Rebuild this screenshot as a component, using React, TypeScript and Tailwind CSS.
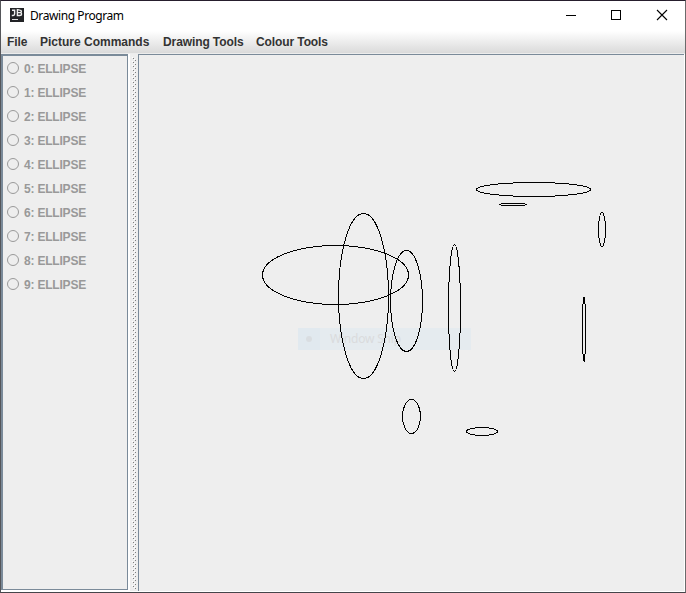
type EllipseBox = [left: number, top: number, right: number, bottom: number];

const ellipses: EllipseBox[] = [
  [262, 245, 408, 304],
  [338, 213, 388, 378],
  [390, 250, 422, 351],
  [448, 244, 460, 371],
  [476, 182, 590, 196],
  [499, 203, 526, 205],
  [598, 212, 605, 246],
  [582, 297, 585, 361],
  [402, 399, 420, 433],
  [466, 427, 497, 435],
];

const menus = [
  { label: "File", box: "w-[33px] tracking-[-0.1px]" },
  { label: "Picture Commands", box: "w-[123px] tracking-[0px]" },
  { label: "Drawing Tools", box: "w-[93px] tracking-[-0.1px]" },
  { label: "Colour Tools", box: "w-[90px] tracking-[-0.1px]" },
];

function TitleBar() {
  return (
    <header className="flex h-[30px] shrink-0 items-center bg-white pl-[9px]">
      <svg width="14" height="14" viewBox="0 0 14 14" className="relative -top-px shrink-0">
        <rect width="14" height="14" fill="#222326" />
        <path d="M2 2.2h2.6v3.9q0 1.4-1.4 1.4H1.8M7.4 1.6v5.9h2.4q1.8 0 1.8-1.5 0-1.3-1.4-1.4 1.2-.2 1.2-1.3 0-1.2-1.6-1.2zM7.4 4.6h3" fill="none" stroke="#eee" strokeWidth="1.4" />
        <path d="M2 11.5h6" stroke="#ddd" />
      </svg>
      <h1 className="ml-[6px] grow whitespace-nowrap font-['Noto_Sans','Open_Sans',sans-serif] text-[12px] leading-[16px] tracking-[-0.42px] text-black">
        Drawing Program
      </h1>
      <svg width="120" height="30" viewBox="565 1 120 30" fill="none" stroke="#000" className="shrink-0">
        <path d="M566 15.5h10M611.5 10.5h9v9h-9z" shapeRendering="crispEdges" />
        <path d="M657 10l10 10M667 10l-10 10" strokeWidth="1.1" />
      </svg>
    </header>
  );
}

function ShapeList() {
  return (
    <aside className="flex w-[127px] shrink-0 flex-col border-t-2 border-r border-b border-l-2 border-[#7a8a99] pt-[1px]">
      {ellipses.map((_, i) => (
        <label key={i} className="flex h-6 shrink-0 items-center pl-[4px]">
          <svg width="12" height="12" viewBox="0 0 12 12" className="relative -top-px shrink-0">
            <circle cx="6" cy="6" r="5.5" fill="none" stroke="#999" />
          </svg>
          <span className="ml-[5px] whitespace-nowrap text-[12px] font-bold leading-[14px] tracking-[-0.2px] text-[#999]">
            {i}: ELLIPSE
          </span>
        </label>
      ))}
    </aside>
  );
}

function Divider() {
  return (
    <svg width="8" height="537" viewBox="130 54 8 537" shapeRendering="crispEdges" className="shrink-0">
      <defs>
        <pattern id="bumps" x="132" y="57" width="4" height="4" patternUnits="userSpaceOnUse">
          <path d="M0 0h1v1h-1zM2 2h1v1h-1z" fill="#fff" />
          <path d="M1 1h1v1h-1zM3 3h1v1h-1z" fill="#7f7f7f" />
        </pattern>
      </defs>
      <rect x="132" y="57" width="4" height="532" fill="url(#bumps)" />
    </svg>
  );
}

// Outlines only a few pixels across are stepped by hand; larger ones are true ellipses.
function Outline({ box: [l, t, r, b] }: { box: EllipseBox }) {
  if (b - t < 4) {
    return (
      <path
        d={`M${l + 2} ${t + 0.5}H${r - 1}M${l + 2} ${b + 0.5}H${r - 1}M${l} ${t + 1.5}h2M${r - 1} ${t + 1.5}h2`}
      />
    );
  }
  if (r - l < 4) {
    return (
      <path
        d={`M${l + 0.5} ${t + 7}V${b - 7}M${r + 0.5} ${t + 7}V${b - 7}M${l + 1.5} ${t}v7M${l + 2.5} ${t}v7M${l + 1.5} ${b - 7}v7M${l + 2.5} ${b - 7}v8`}
      />
    );
  }
  return <ellipse cx={(l + r + 1) / 2} cy={(t + b + 1) / 2} rx={(r - l) / 2} ry={(b - t) / 2} />;
}

function Canvas() {
  return (
    <main className="relative grow border-t border-l border-[#7a8a99]">
      <div className="absolute left-[159px] top-[273px] flex h-[22px] w-[173px] items-center bg-[#e5ebef]">
        <span className="flex h-full w-[22px] items-center justify-center bg-[#e1e9ef]">
          <svg width="6" height="6" viewBox="0 0 6 6">
            <circle cx="3" cy="3" r="3" fill="#d9dde1" />
          </svg>
        </span>
        <span className="ml-[10px] whitespace-nowrap font-['Noto_Sans','Open_Sans',sans-serif] text-[12px] leading-[16px] tracking-[-0.2px] text-[#dadbdd]">
          Window Snip
        </span>
      </div>
      <svg
        width="545"
        height="536"
        viewBox="139 55 545 536"
        fill="none"
        stroke="#000"
        shapeRendering="crispEdges"
        className="absolute left-0 top-0"
      >
        {ellipses.map((box, i) => (
          <Outline key={i} box={box} />
        ))}
      </svg>
    </main>
  );
}

export default function App() {
  return (
    <div className="flex h-[593px] w-[686px] flex-col border border-t-[#261e2d] border-r-[#6b6b6b] border-b-[#45454a] border-l-[#55565a] bg-[#eee] font-['Liberation_Sans',Arial,sans-serif]">
      <TitleBar />
      <nav className="flex h-[22px] shrink-0 items-center bg-linear-to-b from-white to-[#dadada] pl-[6px] text-[12px] font-bold leading-[14px] text-[#333]">
        {menus.map((m) => (
          <span key={m.label} className={"shrink-0 whitespace-nowrap " + m.box}>
            {m.label}
          </span>
        ))}
      </nav>
      <div className="h-px shrink-0 bg-[#ececec]" />
      <div className="flex min-h-0 grow border-r border-b border-white">
        <div className="flex w-[129px] shrink-0 border-r-2 border-b border-white">
          <ShapeList />
        </div>
        <Divider />
        <Canvas />
      </div>
    </div>
  );
}
